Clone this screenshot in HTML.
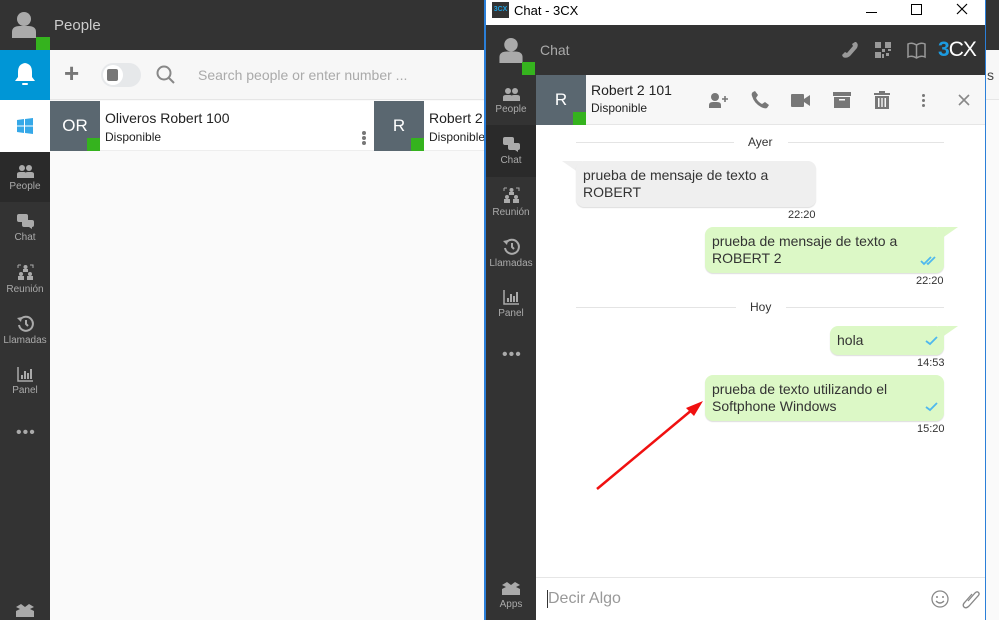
<!DOCTYPE html>
<html><head><meta charset="utf-8">
<style>
*{box-sizing:border-box;margin:0;padding:0}
body{width:999px;height:620px;overflow:hidden;position:relative;font-family:"Liberation Sans",Arial,sans-serif;background:#fafafa}
.a{position:absolute}
.dark{background:#333}
.nav{position:absolute;width:50px;text-align:center;color:#aaa;font-size:10px}
.nav svg{display:block;margin:0 auto 3px}
.g{background:#35b31e}
.t{position:absolute;white-space:nowrap}
.bub{position:absolute;border-radius:8px;font-size:14px;color:#333;line-height:17px;padding:6px 7px}
.me{background:#dcf8c6}
.time{position:absolute;font-size:11px;color:#333}
.chk{position:absolute}
</style></head><body>

<!-- LEFT APP -->
<div class="a dark" style="left:0;top:0;width:486px;height:50px"></div>
<svg class="a" style="left:12px;top:11px" width="24" height="27" viewBox="0 0 24 27"><circle cx="12" cy="8" r="7" fill="#aaa"/><path d="M0 27 V21 Q0 15 8 15 H16 Q24 15 24 21 V27Z" fill="#aaa"/></svg>
<div class="a g" style="left:36px;top:37px;width:14px;height:13px"></div>
<div class="t" style="left:54px;top:17px;color:#ccc;font-size:15px">People</div>
<div class="a dark" style="left:0;top:50px;width:50px;height:570px"></div>
<div class="a" style="left:0;top:50px;width:50px;height:50px;background:#0096d6"></div>
<svg class="a" style="left:14px;top:62px" width="22" height="26" viewBox="0 0 22 26"><path d="M11 1 Q4 2 4 10 V15 L1 19 H21 L18 15 V10 Q18 2 11 1Z" fill="#fff"/><rect x="8" y="21" width="6" height="2" rx="1" fill="#fff"/></svg>
<div class="a" style="left:0;top:100px;width:50px;height:52px;background:#fff"></div>
<svg class="a" style="left:17px;top:118px" width="16" height="16" viewBox="0 0 16 16"><path d="M0 2 L7 1 V7.5 H0Z M8 1 L16 0 V7.5 H8Z M0 8.5 H7 V15 L0 14Z M8 8.5 H16 V16 L8 15Z" fill="#35a8e8"/></svg>
<div class="a" style="left:0;top:152px;width:50px;height:50px;background:#2a2a2a"></div>
<div class="nav" style="left:0;top:165px"><svg width="17" height="13" viewBox="0 0 17 13"><circle cx="5" cy="3" r="3" fill="#aaa"/><circle cx="12" cy="3" r="3" fill="#aaa"/><path d="M0 13V9Q0 7 3 7H7Q9 7 9 9V13Z M8 13V9Q8 7 11 7H14Q17 7 17 9V13Z" fill="#aaa"/></svg>People</div>
<div class="nav" style="left:0;top:214px"><svg width="17" height="15" viewBox="0 0 17 15"><rect x="0" y="0" width="11" height="8" rx="2" fill="#aaa"/><path d="M5 6H15Q17 6 17 8V11Q17 13 15 13L15 15 12 13H7Q5 13 5 11Z" fill="#aaa"/></svg>Chat</div>
<div class="nav" style="left:0;top:264px"><svg width="17" height="17" viewBox="0 0 17 17"><path d="M1 1H4M1 1V4M13 1H16V4" stroke="#aaa" fill="none"/><circle cx="8.5" cy="3" r="2" fill="#aaa"/><rect x="6" y="5" width="5" height="3" fill="#aaa"/><circle cx="4" cy="10" r="2" fill="#aaa"/><circle cx="13" cy="10" r="2" fill="#aaa"/><rect x="1" y="12" width="6" height="4" fill="#aaa"/><rect x="10" y="12" width="6" height="4" fill="#aaa"/></svg>Reunión</div>
<div class="nav" style="left:0;top:315px"><svg width="17" height="17" viewBox="0 0 17 17"><path d="M3 5 A7 7 0 1 1 2 10" stroke="#aaa" stroke-width="2" fill="none"/><path d="M0 3 L4 7 L5 2Z" fill="#aaa"/><path d="M9 5V9L11 11" stroke="#aaa" stroke-width="2" fill="none"/></svg>Llamadas</div>
<div class="nav" style="left:0;top:367px"><svg width="16" height="15" viewBox="0 0 16 15"><path d="M1 0V14H16" stroke="#aaa" stroke-width="1.5" fill="none"/><rect x="4" y="8" width="2" height="4" fill="#aaa"/><rect x="7" y="4" width="2" height="8" fill="#aaa"/><rect x="10" y="6" width="2" height="6" fill="#aaa"/><rect x="13" y="2" width="2" height="10" fill="#aaa"/></svg>Panel</div>
<div class="t" style="left:16px;top:424px;color:#aaa;font-size:16px;letter-spacing:1px">•••</div>
<svg class="a" style="left:16px;top:604px" width="18" height="14" viewBox="0 0 18 14"><path d="M0 3L5 0 9 3 13 0 18 3 14 5 18 7V13H0V7L4 5Z" fill="#aaa"/></svg>

<div class="a" style="left:50px;top:50px;width:436px;height:50px;background:#f7f7f7;border-bottom:1px solid #e6e6e6"></div>
<div class="t" style="left:64px;top:58px;color:#777;font-size:26px;font-weight:bold">+</div>
<div class="a" style="left:101px;top:63px;width:40px;height:24px;border-radius:12px;background:#e6e8ea"></div>
<div class="a" style="left:103px;top:65px;width:20px;height:20px;border-radius:10px;background:#fff"></div>
<div class="a" style="left:107px;top:69px;width:11px;height:12px;border-radius:2px;background:#777"></div>
<svg class="a" style="left:156px;top:65px" width="20" height="20" viewBox="0 0 20 20"><circle cx="8" cy="8" r="6.5" stroke="#888" stroke-width="2" fill="none"/><path d="M13 13L18 18" stroke="#888" stroke-width="2"/></svg>
<div class="t" style="left:198px;top:67px;color:#aaa;font-size:14px">Search people or enter number ...</div>

<div class="a" style="left:50px;top:101px;width:436px;height:50px;background:#fff;border-bottom:1px solid #eee"></div>
<div class="a" style="left:50px;top:101px;width:50px;height:50px;background:#5a6770;color:#fff;font-size:17px;text-align:center;line-height:50px">OR</div>
<div class="a g" style="left:87px;top:138px;width:13px;height:13px"></div>
<div class="t" style="left:105px;top:110px;font-size:14px;color:#222">Oliveros Robert 100</div>
<div class="t" style="left:105px;top:130px;font-size:12px;color:#222">Disponible</div>
<div class="a" style="left:362px;top:131px;width:4px;height:4px;border-radius:2px;background:#777;box-shadow:0 5px 0 #777,0 10px 0 #777"></div>
<div class="a" style="left:374px;top:101px;width:50px;height:50px;background:#5a6770;color:#fff;font-size:17px;text-align:center;line-height:50px">R</div>
<div class="a g" style="left:411px;top:138px;width:13px;height:13px"></div>
<div class="t" style="left:429px;top:110px;font-size:14px;color:#222">Robert 2</div>
<div class="t" style="left:429px;top:130px;font-size:12px;color:#222">Disponible</div>

<div class="a dark" style="left:986px;top:0;width:13px;height:50px"></div>
<div class="a" style="left:986px;top:50px;width:13px;height:570px;background:#fafafa"></div>
<div class="a" style="left:986px;top:50px;width:13px;height:50px;background:#f7f7f7;border-bottom:1px solid #e6e6e6"></div>
<div class="t" style="left:987px;top:67px;color:#444;font-size:14px">s</div>

<!-- CHAT WINDOW -->
<div class="a" style="left:484px;top:0;width:502px;height:620px;background:#fff;border-left:2px solid #2b7fd8;border-right:1px solid #2b7fd8"></div>
<div class="a" style="left:492px;top:2px;width:17px;height:16px;background:#333;color:#1fa0e0;font-size:7px;line-height:16px;text-align:center;font-weight:bold">3CX</div>
<div class="t" style="left:514px;top:3px;font-size:13px;color:#000">Chat - 3CX</div>
<div class="a" style="left:866px;top:12px;width:11px;height:1px;background:#000"></div>
<div class="a" style="left:911px;top:4px;width:11px;height:11px;border:1px solid #000"></div>
<svg class="a" style="left:956px;top:3px" width="12" height="12"><path d="M1 1L11 11M11 1L1 11" stroke="#000" stroke-width="1.2"/></svg>

<div class="a dark" style="left:486px;top:25px;width:499px;height:50px"></div>
<svg class="a" style="left:499px;top:37px" width="24" height="26" viewBox="0 0 24 27"><circle cx="12" cy="8" r="7" fill="#aaa"/><path d="M0 27 V21 Q0 15 8 15 H16 Q24 15 24 21 V27Z" fill="#aaa"/></svg>
<div class="a g" style="left:522px;top:62px;width:13px;height:13px"></div>
<div class="t" style="left:540px;top:42px;color:#aaa;font-size:14px">Chat</div>
<svg class="a" style="left:841px;top:41px" width="18" height="18" viewBox="0 0 18 18"><path d="M15 1Q18 3 16 7L9 15Q5 18 2 16L1 14 4 11 6 12 12 5 11 3 14 1Z" fill="#999"/></svg>
<svg class="a" style="left:875px;top:42px" width="16" height="16" viewBox="0 0 16 16" fill="#999"><rect x="0" y="0" width="6" height="6"/><rect x="10" y="0" width="6" height="6"/><rect x="0" y="10" width="6" height="6"/><rect x="7" y="7" width="3" height="3"/><rect x="11" y="11" width="3" height="3"/><rect x="7" y="12" width="2" height="4"/><rect x="13" y="7" width="3" height="2"/></svg>
<svg class="a" style="left:907px;top:41px" width="19" height="18" viewBox="0 0 19 18"><path d="M1 3Q5 1 9.5 4Q14 1 18 3V16Q14 14 9.5 17Q5 14 1 16Z M9.5 4V17" stroke="#999" stroke-width="1.5" fill="none"/></svg>
<div class="t" style="left:938px;top:38px;font-size:21px;letter-spacing:-1px"><span style="color:#1c9be0;font-weight:bold">3</span><span style="color:#fff">CX</span></div>

<div class="a dark" style="left:486px;top:75px;width:50px;height:545px"></div>
<div class="a" style="left:486px;top:125px;width:50px;height:52px;background:#2a2a2a"></div>
<div class="nav" style="left:486px;top:88px"><svg width="17" height="13" viewBox="0 0 17 13"><circle cx="5" cy="3" r="3" fill="#aaa"/><circle cx="12" cy="3" r="3" fill="#aaa"/><path d="M0 13V9Q0 7 3 7H7Q9 7 9 9V13Z M8 13V9Q8 7 11 7H14Q17 7 17 9V13Z" fill="#aaa"/></svg>People</div>
<div class="nav" style="left:486px;top:137px"><svg width="17" height="15" viewBox="0 0 17 15"><rect x="0" y="0" width="11" height="8" rx="2" fill="#aaa"/><path d="M5 6H15Q17 6 17 8V11Q17 13 15 13L15 15 12 13H7Q5 13 5 11Z" fill="#aaa"/></svg>Chat</div>
<div class="nav" style="left:486px;top:187px"><svg width="17" height="17" viewBox="0 0 17 17"><path d="M1 1H4M1 1V4M13 1H16V4" stroke="#aaa" fill="none"/><circle cx="8.5" cy="3" r="2" fill="#aaa"/><rect x="6" y="5" width="5" height="3" fill="#aaa"/><circle cx="4" cy="10" r="2" fill="#aaa"/><circle cx="13" cy="10" r="2" fill="#aaa"/><rect x="1" y="12" width="6" height="4" fill="#aaa"/><rect x="10" y="12" width="6" height="4" fill="#aaa"/></svg>Reunión</div>
<div class="nav" style="left:486px;top:238px"><svg width="17" height="17" viewBox="0 0 17 17"><path d="M3 5 A7 7 0 1 1 2 10" stroke="#aaa" stroke-width="2" fill="none"/><path d="M0 3 L4 7 L5 2Z" fill="#aaa"/><path d="M9 5V9L11 11" stroke="#aaa" stroke-width="2" fill="none"/></svg>Llamadas</div>
<div class="nav" style="left:486px;top:290px"><svg width="16" height="15" viewBox="0 0 16 15"><path d="M1 0V14H16" stroke="#aaa" stroke-width="1.5" fill="none"/><rect x="4" y="8" width="2" height="4" fill="#aaa"/><rect x="7" y="4" width="2" height="8" fill="#aaa"/><rect x="10" y="6" width="2" height="6" fill="#aaa"/><rect x="13" y="2" width="2" height="10" fill="#aaa"/></svg>Panel</div>
<div class="t" style="left:502px;top:346px;color:#aaa;font-size:16px;letter-spacing:1px">•••</div>
<div class="nav" style="left:486px;top:582px"><svg width="18" height="14" viewBox="0 0 18 14"><path d="M0 3L5 0 9 3 13 0 18 3 14 5 18 7V13H0V7L4 5Z" fill="#aaa"/></svg>Apps</div>

<div class="a" style="left:536px;top:75px;width:449px;height:50px;background:#f7f7f7;border-bottom:1px solid #e6e6e6"></div>
<div class="a" style="left:536px;top:75px;width:50px;height:50px;background:#5a6770;color:#fff;font-size:17px;text-align:center;line-height:50px">R</div>
<div class="a g" style="left:573px;top:112px;width:13px;height:13px"></div>
<div class="t" style="left:591px;top:82px;font-size:14px;color:#222">Robert 2 101</div>
<div class="t" style="left:591px;top:101px;font-size:12px;color:#222">Disponible</div>
<svg class="a" style="left:709px;top:93px" width="19" height="15" viewBox="0 0 19 15" fill="#777"><circle cx="6" cy="4" r="4"/><path d="M0 15V12Q0 9 4 9H8Q12 9 12 12V15Z"/><path d="M13 6H19M16 3V9" stroke="#777" stroke-width="1.6"/></svg>
<svg class="a" style="left:751px;top:91px" width="18" height="18" viewBox="0 0 18 18"><path d="M4 0L7 4 5 7Q7 11 11 13L14 11 18 14 16 17Q14 18 10 16Q3 12 1 5Q0 2 2 1Z" fill="#777"/></svg>
<svg class="a" style="left:791px;top:94px" width="19" height="13" viewBox="0 0 19 13" fill="#777"><rect x="0" y="0" width="13" height="13" rx="1"/><path d="M13 5L19 1V12L13 8Z"/></svg>
<svg class="a" style="left:833px;top:92px" width="18" height="16" viewBox="0 0 18 16" fill="#777"><rect x="0" y="0" width="18" height="4"/><rect x="1" y="5" width="16" height="11"/><rect x="6" y="7" width="6" height="1.5" fill="#f7f7f7"/></svg>
<svg class="a" style="left:874px;top:91px" width="16" height="18" viewBox="0 0 16 18" fill="#777"><rect x="0" y="2" width="16" height="2"/><rect x="5" y="0" width="6" height="2"/><path d="M1 5H15V18H1Z M4 7V16H5.5V7Z M7.3 7V16H8.7V7Z M10.5 7V16H12V7Z" fill-rule="evenodd"/></svg>
<div class="a" style="left:922px;top:94px;width:3px;height:3px;border-radius:2px;background:#777;box-shadow:0 5px 0 #777,0 10px 0 #777"></div>
<svg class="a" style="left:958px;top:94px" width="12" height="12"><path d="M1 1L11 11M11 1L1 11" stroke="#888" stroke-width="1.6"/></svg>

<!-- messages -->
<div class="a" style="left:576px;top:142px;width:158px;height:1px;background:#e4e4e4"></div>
<div class="a" style="left:788px;top:142px;width:156px;height:1px;background:#e4e4e4"></div>
<div class="t" style="left:748px;top:135px;font-size:12px;color:#333">Ayer</div>
<svg class="a" style="left:562px;top:161px" width="20" height="14"><path d="M0 0H20V14Z" fill="#efefef"/></svg>
<div class="bub" style="left:576px;top:161px;width:240px;height:46px;background:#efefef;box-shadow:0 1px 1px #ddd">prueba de mensaje de texto a ROBERT</div>
<div class="time" style="left:788px;top:209px">22:20</div>

<svg class="a" style="left:938px;top:227px" width="20" height="14"><path d="M0 0H20L0 14Z" fill="#dcf8c6"/></svg>
<div class="bub me" style="left:705px;top:227px;width:239px;height:46px;box-shadow:0 1px 1px #ddd">prueba de mensaje de texto a ROBERT 2</div>
<svg class="a chk" style="left:920px;top:256px" width="19" height="10" viewBox="0 0 19 10"><path d="M1 5L4 8 11 1M7 7L8 8 15 1" stroke="#4fb8ee" stroke-width="1.8" fill="none"/></svg>
<div class="time" style="left:916px;top:275px">22:20</div>

<div class="a" style="left:576px;top:307px;width:160px;height:1px;background:#e4e4e4"></div>
<div class="a" style="left:786px;top:307px;width:158px;height:1px;background:#e4e4e4"></div>
<div class="t" style="left:750px;top:300px;font-size:12px;color:#333">Hoy</div>

<svg class="a" style="left:938px;top:326px" width="20" height="14"><path d="M0 0H20L0 14Z" fill="#dcf8c6"/></svg>
<div class="bub me" style="left:830px;top:326px;width:114px;height:29px;box-shadow:0 1px 1px #ddd">hola</div>
<svg class="a chk" style="left:925px;top:336px" width="14" height="10" viewBox="0 0 14 10"><path d="M1 5L5 8 12 1" stroke="#4fb8ee" stroke-width="1.8" fill="none"/></svg>
<div class="time" style="left:917px;top:357px">14:53</div>

<div class="bub me" style="left:705px;top:375px;width:239px;height:46px;box-shadow:0 1px 1px #ddd">prueba de texto utilizando el Softphone Windows</div>
<svg class="a chk" style="left:925px;top:402px" width="14" height="10" viewBox="0 0 14 10"><path d="M1 5L5 8 12 1" stroke="#4fb8ee" stroke-width="1.8" fill="none"/></svg>
<div class="time" style="left:917px;top:423px">15:20</div>

<svg class="a" style="left:590px;top:395px" width="120" height="100"><path d="M7 94L103 14" stroke="#f01010" stroke-width="2.5"/><path d="M113 6L96 13 104 21Z" fill="#f01010"/></svg>

<div class="a" style="left:536px;top:577px;width:449px;height:1px;background:#e6e6e6"></div>
<div class="a" style="left:547px;top:590px;width:1px;height:18px;background:#333"></div>
<div class="t" style="left:548px;top:590px;font-size:16px;color:#999">Decir Algo</div>
<svg class="a" style="left:931px;top:590px" width="18" height="18" viewBox="0 0 18 18"><circle cx="9" cy="9" r="8" stroke="#888" stroke-width="1.3" fill="none"/><circle cx="6" cy="7" r="1" fill="#888"/><circle cx="12" cy="7" r="1" fill="#888"/><path d="M5 11Q9 15 13 11" stroke="#888" stroke-width="1.3" fill="none"/></svg>
<svg class="a" style="left:962px;top:590px" width="18" height="19" viewBox="0 0 18 19"><path d="M6 11L13 3Q15 1 16.5 2.5Q18 4 16 6L7 16Q4 19 2 17Q0 15 3 12L10 4" stroke="#888" stroke-width="1.3" fill="none"/></svg>
</body></html>
